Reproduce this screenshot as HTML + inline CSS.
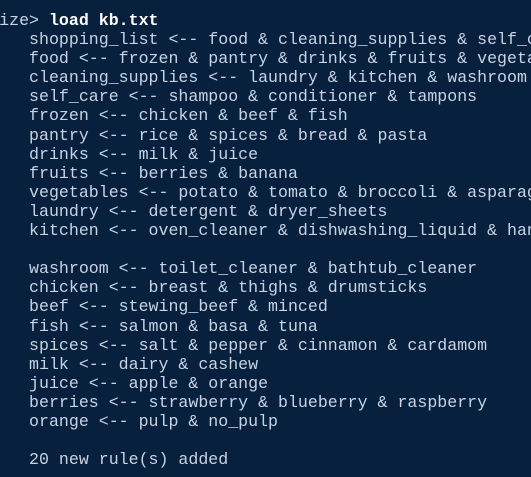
<!DOCTYPE html>
<html><head><style>
html,body{margin:0;padding:0;width:531px;height:477px;overflow:hidden;background:#06203d;}
.w{position:absolute;left:0;top:0;width:531px;height:477px;overflow:hidden;}
pre{margin:0;position:absolute;left:-10.8px;top:11px;font-family:"Liberation Mono",monospace;font-size:16.6px;line-height:19.1px;color:#c9d3e4;white-space:pre;}
b{color:#fff;font-weight:bold;}
</style></head><body><div class="w">
<pre>size&gt; <b>load kb.txt</b>
    shopping_list &lt;-- food &amp; cleaning_supplies &amp; self_c
    food &lt;-- frozen &amp; pantry &amp; drinks &amp; fruits &amp; vegeta
    cleaning_supplies &lt;-- laundry &amp; kitchen &amp; washroom
    self_care &lt;-- shampoo &amp; conditioner &amp; tampons
    frozen &lt;-- chicken &amp; beef &amp; fish
    pantry &lt;-- rice &amp; spices &amp; bread &amp; pasta
    drinks &lt;-- milk &amp; juice
    fruits &lt;-- berries &amp; banana
    vegetables &lt;-- potato &amp; tomato &amp; broccoli &amp; asparag
    laundry &lt;-- detergent &amp; dryer_sheets
    kitchen &lt;-- oven_cleaner &amp; dishwashing_liquid &amp; han

    washroom &lt;-- toilet_cleaner &amp; bathtub_cleaner
    chicken &lt;-- breast &amp; thighs &amp; drumsticks
    beef &lt;-- stewing_beef &amp; minced
    fish &lt;-- salmon &amp; basa &amp; tuna
    spices &lt;-- salt &amp; pepper &amp; cinnamon &amp; cardamom
    milk &lt;-- dairy &amp; cashew
    juice &lt;-- apple &amp; orange
    berries &lt;-- strawberry &amp; blueberry &amp; raspberry
    orange &lt;-- pulp &amp; no_pulp

    20 new rule(s) added
</pre></div>
</body></html>
